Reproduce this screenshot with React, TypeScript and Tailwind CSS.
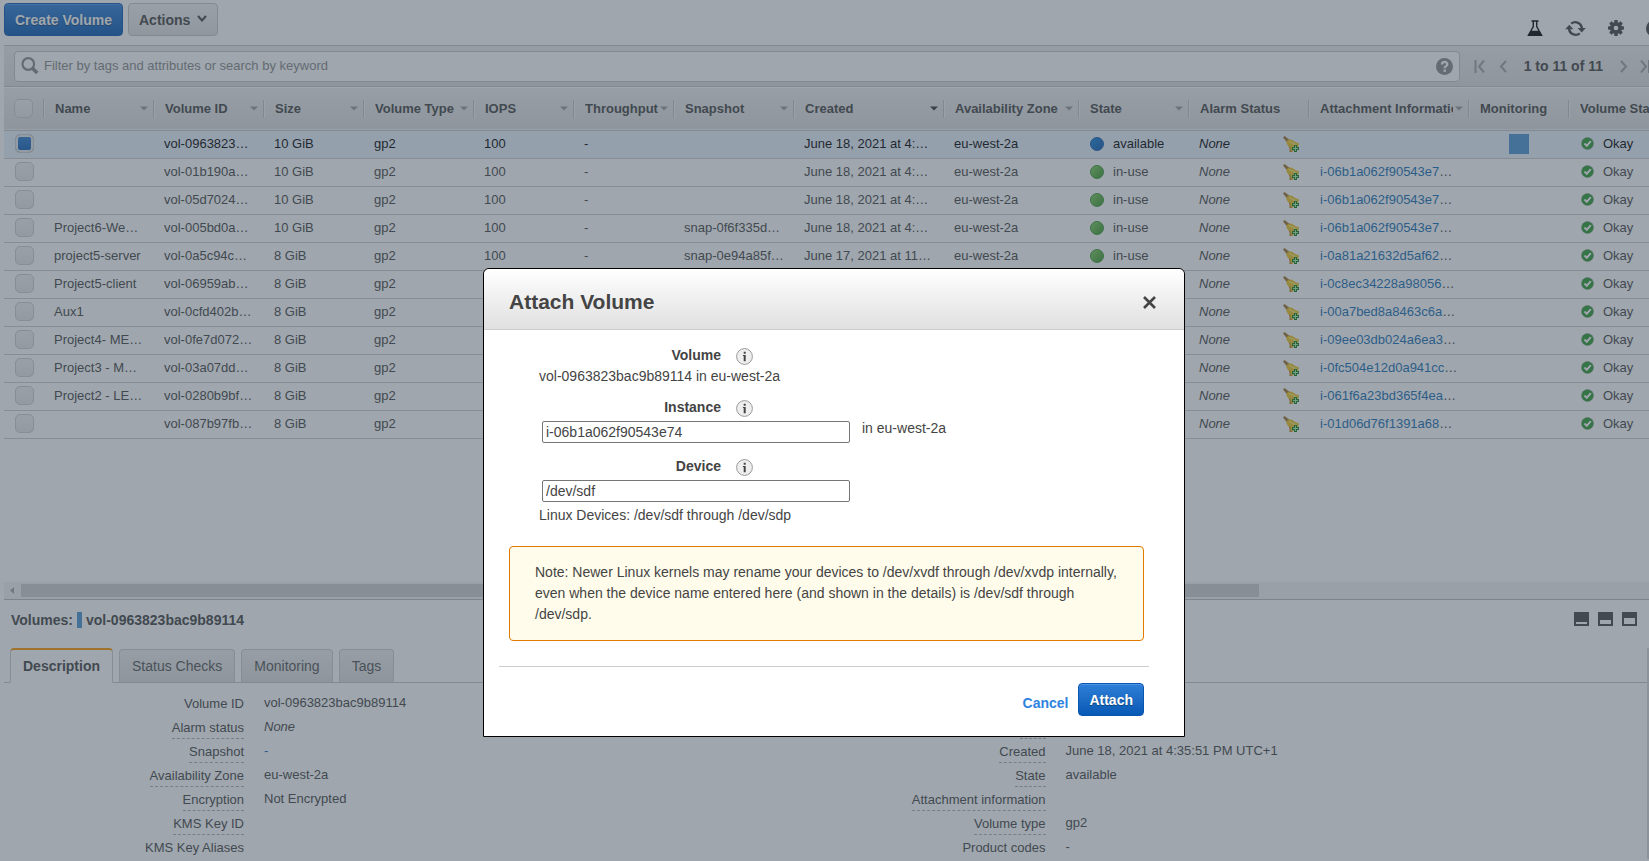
import React from "react";

type Column = { label: string; width: string; menu?: boolean; sorted?: boolean };

const columns: Column[] = [
  { label: "Name", width: "w-[110px]", menu: true },
  { label: "Volume ID", width: "w-[110px]", menu: true },
  { label: "Size", width: "w-[100px]", menu: true },
  { label: "Volume Type", width: "w-[110px]", menu: true },
  { label: "IOPS", width: "w-[100px]", menu: true },
  { label: "Throughput", width: "w-[100px]", menu: true },
  { label: "Snapshot", width: "w-[120px]", menu: true },
  { label: "Created", width: "w-[150px]", menu: true, sorted: true },
  { label: "Availability Zone", width: "w-[135px]", menu: true },
  { label: "State", width: "w-[110px]", menu: true },
  { label: "Alarm Status", width: "w-[120px]" },
  { label: "Attachment Information", width: "w-[160px]", menu: true },
  { label: "Monitoring", width: "w-[100px]" },
  { label: "Volume Status", width: "w-[120px]" },
];

type Volume = {
  name: string;
  id: string;
  size: string;
  snapshot: string;
  created: string;
  state: "available" | "in-use";
  instance: string;
};

const volumes: Volume[] = [
  { name: "", id: "vol-0963823…", size: "10 GiB", snapshot: "", created: "June 18, 2021 at 4:…", state: "available", instance: "" },
  { name: "", id: "vol-01b190a…", size: "10 GiB", snapshot: "", created: "June 18, 2021 at 4:…", state: "in-use", instance: "i-06b1a062f90543e7" },
  { name: "", id: "vol-05d7024…", size: "10 GiB", snapshot: "", created: "June 18, 2021 at 4:…", state: "in-use", instance: "i-06b1a062f90543e7" },
  { name: "Project6-We…", id: "vol-005bd0a…", size: "10 GiB", snapshot: "snap-0f6f335d…", created: "June 18, 2021 at 4:…", state: "in-use", instance: "i-06b1a062f90543e7" },
  { name: "project5-server", id: "vol-0a5c94c…", size: "8 GiB", snapshot: "snap-0e94a85f…", created: "June 17, 2021 at 11…", state: "in-use", instance: "i-0a81a21632d5af62" },
  { name: "Project5-client", id: "vol-06959ab…", size: "8 GiB", snapshot: "", created: "", state: "in-use", instance: "i-0c8ec34228a98056" },
  { name: "Aux1", id: "vol-0cfd402b…", size: "8 GiB", snapshot: "", created: "", state: "in-use", instance: "i-00a7bed8a8463c6a" },
  { name: "Project4- ME…", id: "vol-0fe7d072…", size: "8 GiB", snapshot: "", created: "", state: "in-use", instance: "i-09ee03db024a6ea3" },
  { name: "Project3 - M…", id: "vol-03a07dd…", size: "8 GiB", snapshot: "", created: "", state: "in-use", instance: "i-0fc504e12d0a941cc" },
  { name: "Project2 - LE…", id: "vol-0280b9bf…", size: "8 GiB", snapshot: "", created: "", state: "in-use", instance: "i-061f6a23bd365f4ea" },
  { name: "", id: "vol-087b97fb…", size: "8 GiB", snapshot: "", created: "", state: "in-use", instance: "i-01d06d76f1391a68" },
];

type Detail = { label: string; value?: React.ReactNode; plain?: boolean };

const leftDetails: Detail[] = [
  { label: "Volume ID", value: "vol-0963823bac9b89114", plain: true },
  { label: "Alarm status", value: <em>None</em> },
  { label: "Snapshot", value: <a href="#snapshot" className="text-[#0a6cce]">-</a> },
  { label: "Availability Zone", value: "eu-west-2a" },
  { label: "Encryption", value: "Not Encrypted" },
  { label: "KMS Key ID" },
  { label: "KMS Key Aliases", plain: true },
];

const rightDetails: Detail[] = [
  { label: "Size", value: "10 GiB" },
  { label: "Created", value: "June 18, 2021 at 4:35:51 PM UTC+1" },
  { label: "State", value: "available" },
  { label: "Attachment information" },
  { label: "Volume type", value: "gp2" },
  { label: "Product codes", value: "-", plain: true },
];

function FlaskIcon() {
  return (
    <svg width="16" height="17" viewBox="0 0 16 17" aria-hidden="true">
      <path d="M4.5 1h7M6.3 1.5v5L1.4 15.2h13.2L9.7 6.5v-5" fill="none" stroke="#000" strokeWidth="1.4" />
      <path d="M4 10.8h8l3 5.2H1z" fill="#000" />
    </svg>
  );
}

function RefreshIcon() {
  return (
    <svg width="21" height="17" viewBox="0 0 21 17" aria-hidden="true">
      <g fill="none" stroke="#444" strokeWidth="2.4">
        <path d="M6.2 3.6A6.6 6.6 0 0 1 16.9 8.6" />
        <path d="M14.8 13.4A6.6 6.6 0 0 1 4.1 8.4" />
      </g>
      <path d="M12.6 8h8.2l-4.1 4.4zM.2 9.2h8.2L4.3 4.8z" fill="#444" />
    </svg>
  );
}

function GearIcon() {
  return (
    <svg width="16" height="16" viewBox="0 0 16 16" className="mb-px" aria-hidden="true">
      <g fill="#444">
        <rect x="6.2" y="0" width="3.6" height="16" rx="0.8" />
        <rect x="6.2" y="0" width="3.6" height="16" rx="0.8" transform="rotate(45 8 8)" />
        <rect x="6.2" y="0" width="3.6" height="16" rx="0.8" transform="rotate(90 8 8)" />
        <rect x="6.2" y="0" width="3.6" height="16" rx="0.8" transform="rotate(135 8 8)" />
        <circle cx="8" cy="8" r="6" />
      </g>
      <circle cx="8" cy="8" r="2.3" fill="#fff" />
    </svg>
  );
}

function HelpIcon({ className }: { className: string }) {
  return (
    <svg width="17" height="17" viewBox="0 0 17 17" className={className} aria-hidden="true">
      <circle cx="8.5" cy="8.5" r="8.5" fill="currentColor" />
      <path d="M5.9 6.6c0-3.6 5.5-3.4 5.4-.3 0 1.9-2.6 1.8-2.6 3.9" fill="none" stroke="#fff" strokeWidth="2.3" />
      <rect x="7.5" y="11.5" width="2.4" height="2.3" fill="#fff" />
    </svg>
  );
}

function SearchIcon() {
  return (
    <svg width="18" height="18" viewBox="0 0 18 18" className="shrink-0" aria-hidden="true">
      <circle cx="7.3" cy="7" r="5.8" fill="none" stroke="#888" strokeWidth="2.2" />
      <path d="M11.4 11.2l4.9 4.9" stroke="#888" strokeWidth="3.6" />
    </svg>
  );
}

function BellIcon() {
  return (
    <svg width="16" height="16" viewBox="0 0 16 16" aria-hidden="true">
      <path d="M0 1.5L1.6 0l5 4-2.400 2.400z" fill="#a0722c" />
      <path
        d="M3.600 5.500C5 3.400 8 3 10.200 4.600c1.700 1.300 3.400 2.200 5.600 2.600.4 2.600-1.200 4.800-3.200 6.400-1.800 1.500-3.800 2.400-5.800 2.200.5-2.200-.2-4-1.500-5.500C3.900 8.700 3 7.200 3.600 5.500z"
        fill="#ecc420"
      />
      <path d="M6 5.800c3 .2 4 2.400 7.500 3" stroke="#fbe46a" strokeWidth="1.500" fill="none" />
      <path d="M6.200 10.500c1.200 1.500 1.300 3 .8 5l2.500-.3" stroke="#b98c2c" strokeWidth="1.200" fill="none" />
      <path d="M11 9h3v2h2v3h-2v2h-3v-2H9v-3h2z" fill="#0c7d20" />
      <path d="M12.500 10v5M10 12.500h5" stroke="#a6efa6" strokeWidth="1" />
    </svg>
  );
}

function OkayIcon() {
  return (
    <svg width="13" height="13" viewBox="0 0 13 13" className="mb-[2px]" aria-hidden="true">
      <circle cx="6.5" cy="6.5" r="6" fill="#2a9a30" stroke="#7d9b7e" strokeWidth=".6" />
      <path d="M3.500 6.500l2.300 2.300 4-4.600" fill="none" stroke="#fff" strokeWidth="2" />
    </svg>
  );
}

function InfoIcon() {
  return (
    <svg width="17" height="17" viewBox="0 0 17 17" aria-hidden="true">
      <circle cx="8.5" cy="8.5" r="7.9" fill="#eee" stroke="#999" />
      <path d="M7.700 3.800h2v1.900h-2zM6.900 7h2.800v6.300h-2V7.900h-.8z" fill="#444" />
    </svg>
  );
}

function PageArrow({ label, path, className }: { label: string; path: string; className: string }) {
  return (
    <button type="button" aria-label={label} className={className}>
      <svg width="11" height="13" viewBox="0 0 11 13" aria-hidden="true">
        <path d={path} fill="none" stroke="#a0a0a0" strokeWidth="2" />
      </svg>
    </button>
  );
}

function PaneIcon({ top, label }: { top: number; label: string }) {
  return (
    <button type="button" aria-label={label}>
      <svg width="15" height="14" viewBox="0 0 15 14" className="block" aria-hidden="true">
        <path d="M0 0h15v14H0z" fill="#444" />
        <path d={`M2 ${top}h11v${12 - top}H2z`} fill="#fff" />
      </svg>
    </button>
  );
}

const checkbox =
  "block h-[19px] w-[19px] appearance-none rounded-[5px] border border-[#ccc] bg-linear-to-b from-[#f2f2f2] to-[#e6e6e6] checked:from-[#2e7fd6] checked:to-[#0a5bb5] checked:shadow-[inset_0_0_0_2px_#e8e8e8]";

function VolumeTable() {
  return (
    <table className="w-[1685px] table-fixed border-collapse text-[13px] leading-4">
      <thead>
        <tr className="h-[42px] border-b border-[#c6c6c6] bg-linear-to-b from-[#efefef] to-[#dddddd] text-left">
          <th className="w-10 p-0">
            <div className="flex h-[19px] items-center border-r border-[#c2c2c2] pl-[10px] shadow-[1px_0_0_#f4f4f4]">
              <input type="checkbox" aria-label="Select all volumes" className={checkbox} />
            </div>
          </th>
          {columns.map((column) => (
            <th key={column.label} className={`${column.width} p-0`}>
              <div className="flex h-[18px] items-center gap-[2px] border-r border-[#c2c2c2] pr-[5px] pl-[11px] shadow-[1px_0_0_#f4f4f4]">
                <span className="min-w-0 flex-1 overflow-hidden whitespace-nowrap">{column.label}</span>
                {column.menu && (
                  <svg width="8" height="5" viewBox="0 0 8 5" className={column.sorted ? "shrink-0 text-[#333]" : "shrink-0 text-[#999]"} aria-hidden="true">
                    <path d="M0 .5h8l-4 4z" fill="currentColor" />
                  </svg>
                )}
              </div>
            </th>
          ))}
        </tr>
      </thead>
      <tbody>
        {volumes.map((volume, index) => {
          const selected = index === 0;
          return (
            <tr
              key={volume.id}
              className={
                selected
                  ? "h-7 border-b border-[#ccc] bg-[#ebf3ff] text-black [&>td]:whitespace-nowrap"
                  : "h-7 border-b border-[#ccc] text-[#444] [&>td]:whitespace-nowrap"
              }
            >
              <td className="pt-0 pr-0 pb-[2px] pl-[11px]">
                <input type="checkbox" defaultChecked={selected} aria-label={`Select ${volume.id}`} className={checkbox} />
              </td>
              <td className="py-0 pl-[10px]">{volume.name}</td>
              <td className="py-0 pl-[10px]">{volume.id}</td>
              <td className="py-0 pl-[10px]">{volume.size}</td>
              <td className="py-0 pl-[10px]">gp2</td>
              <td className="py-0 pl-[10px]">100</td>
              <td className="py-0 pl-[10px]">-</td>
              <td className="py-0 pl-[10px]">{volume.snapshot}</td>
              <td className="py-0 pl-[10px]">{volume.created}</td>
              <td className="py-0 pl-[10px]">eu-west-2a</td>
              <td className="py-0 pl-[11px]">
                <div className="flex items-center gap-[9px]">
                  <span
                    className={
                      volume.state === "available"
                        ? "h-[14px] w-[14px] rounded-full border border-[#1a5fb0] bg-linear-to-br from-[#0f86dc] to-[#1257b0]"
                        : "h-[14px] w-[14px] rounded-full border border-[#3f9a35] bg-linear-to-br from-[#80cf5c] to-[#34962c]"
                    }
                  />
                  {volume.state}
                </div>
              </td>
              <td className="py-0 pr-[10px] pl-[10px]">
                <div className="flex items-center justify-between">
                  <em>None</em>
                  <BellIcon />
                </div>
              </td>
              <td className="py-0 pl-[11px]">
                {volume.instance && (
                  <>
                    <a href={`#${volume.instance}`} className="text-[#146eb4]">{volume.instance}</a>…
                  </>
                )}
              </td>
              <td className="p-0">{selected && <div className="mx-auto h-5 w-5 bg-[#4b95d7]" />}</td>
              <td className="py-0 pl-[12px]">
                <div className="flex items-center gap-[9px]">
                  <OkayIcon />
                  Okay
                </div>
              </td>
            </tr>
          );
        })}
      </tbody>
    </table>
  );
}

function DetailList({ items, className }: { items: Detail[]; className: string }) {
  return (
    <dl className={className}>
      {items.map((item) => (
        <div key={item.label} className="flex h-6 gap-5">
          <dt className="flex w-60 justify-end">
            <span className={item.plain ? "border-b border-transparent pt-[5px] leading-4" : "border-b border-dashed border-[#b0b0b0] pt-[5px] leading-4"}>
              {item.label}
            </span>
          </dt>
          <dd className="pt-1 leading-4">{item.value}</dd>
        </div>
      ))}
    </dl>
  );
}

const blueButton =
  "h-[33px] rounded border border-[#0a55b0] bg-linear-to-b from-[#2e7fd8] to-[#0659b4] text-sm font-bold text-white shadow-[inset_0_1px_0_#4c95e4] [text-shadow:0_1px_1px_#00000060]";
const idleTab =
  "h-[33px] rounded-t border border-b-0 border-[#ccc] bg-linear-to-b from-[#eee] to-[#dcdcdc] px-3 text-[#555]";

function FieldLabel({ htmlFor, children }: { htmlFor?: string; children: string }) {
  return (
    <div className="flex h-5 items-center">
      <label htmlFor={htmlFor} className="w-[182px] text-right font-bold">
        {children}
      </label>
      <button type="button" aria-label={`About ${children}`} className="mt-[3px] ml-[15px]">
        <InfoIcon />
      </button>
    </div>
  );
}

function AttachDialog() {
  const field = "ml-[3px] block h-[22px] w-[308px] rounded-xs border border-[#767676] bg-white px-[3px]";
  return (
    <div role="dialog" aria-labelledby="attach-title" className="w-[702px] rounded-t-md border border-black bg-white text-sm leading-[21px] text-[#444]">
      <header className="flex h-[61px] items-center justify-between rounded-t-md border-b border-[#ccc] bg-linear-to-b from-white to-[#e0e0e0] pt-[6px] pr-7 pl-[25px]">
        <h1 id="attach-title" className="text-[21px] leading-6 font-bold">Attach Volume</h1>
        <button type="button" aria-label="Close">
          <svg width="13" height="13" viewBox="0 0 13 13" aria-hidden="true">
            <path d="M1 1l11 11M12 1L1 12" stroke="#444" strokeWidth="2.6" />
          </svg>
        </button>
      </header>
      <form className="pt-[15px] pb-5" onSubmit={(event) => event.preventDefault()}>
        <div className="pl-[55px]">
          <FieldLabel>Volume</FieldLabel>
          <p className="pt-px">vol-0963823bac9b89114 in eu-west-2a</p>
          <div className="pt-[10px]">
            <FieldLabel htmlFor="instance">Instance</FieldLabel>
            <div className="flex h-[26px] items-end gap-3">
              <input id="instance" defaultValue="i-06b1a062f90543e74" className={field} />
              <span className="self-start pt-px">in eu-west-2a</span>
            </div>
          </div>
          <div className="pt-[13px]">
            <FieldLabel htmlFor="device">Device</FieldLabel>
            <div className="flex h-[26px] items-end">
              <input id="device" defaultValue="/dev/sdf" className={field} />
            </div>
          </div>
          <p className="pt-[3px]">Linux Devices: /dev/sdf through /dev/sdp</p>
        </div>
        <p className="mt-5 mr-10 ml-[25px] rounded border border-[#e07b00] bg-[#fffceb] py-[15px] pr-5 pl-[25px]">
          Note: Newer Linux kernels may rename your devices to /dev/xvdf through /dev/xvdp internally, even when the device name entered here (and shown in the details) is /dev/sdf through /dev/sdp.
        </p>
        <div className="mt-[25px] mr-[35px] ml-[15px] flex items-center justify-end gap-[10px] border-t border-[#ccc] pt-4 pr-[5px]">
          <button type="button" className="pt-2 font-bold text-[#2e84e0]">Cancel</button>
          <button type="submit" className={`${blueButton} px-[10px]`}>Attach</button>
        </div>
      </form>
    </div>
  );
}

export default function App() {
  return (
    <div className="relative h-screen overflow-hidden bg-white font-['Liberation_Sans',Arial,sans-serif] text-[13px] text-[#444]">
      <div className="flex h-full flex-col pl-1">
        <div className="flex h-[45px] shrink-0 items-start gap-[5px] pt-[3px]">
          <button type="button" className={`${blueButton} px-[10px]`}>Create Volume</button>
          <button type="button" className="flex h-[33px] items-center gap-[7px] rounded border border-[#c4c4c4] bg-linear-to-b from-[#f2f2f2] to-[#e0e0e0] px-[10px] text-sm font-bold">
            Actions
            <svg width="10" height="8" viewBox="0 0 10 8" className="mb-px" aria-hidden="true">
              <path d="M1 1l4 4.500L9 1" fill="none" stroke="#444" strokeWidth="2" />
            </svg>
          </button>
          <div className="-mr-[14px] ml-auto flex h-[34px] items-end gap-[22px] pt-[6px]">
            <button type="button" aria-label="Experiments"><FlaskIcon /></button>
            <button type="button" aria-label="Refresh"><RefreshIcon /></button>
            <button type="button" aria-label="Settings"><GearIcon /></button>
            <button type="button" aria-label="Help"><HelpIcon className="text-[#444]" /></button>
          </div>
        </div>

        <div className="flex h-[42px] shrink-0 items-center border-t border-b border-[#c4c4c4] bg-linear-to-b from-[#ececec] to-[#dedede] pl-[10px]">
          <div className="flex h-[31px] flex-1 items-center gap-[5px] rounded border border-[#c4c4c4] bg-white px-[6px]">
            <SearchIcon />
            <input
              type="search"
              aria-label="Filter volumes"
              placeholder="Filter by tags and attributes or search by keyword"
              className="min-w-0 flex-1 bg-transparent outline-none placeholder:text-[#888]"
            />
            <button type="button" aria-label="Search help"><HelpIcon className="text-[#888]" /></button>
          </div>
          <nav className="-mr-[2px] flex shrink-0 items-center pl-[14px] text-sm font-bold" aria-label="Pages">
            <PageArrow label="First page" path="M1.500 0v13M10 0.500l-5 6 5 6" className="" />
            <PageArrow label="Previous page" path="M9 1l-5 5.500 5 5.500" className="ml-3" />
            <span className="mr-[14px] ml-4 whitespace-nowrap">1 to 11 of 11</span>
            <PageArrow label="Next page" path="M4 1l5 5.500-5 5.500" className="" />
            <PageArrow label="Last page" path="M1 .500l5 6-5 6M9 0v13" className="ml-3" />
          </nav>
        </div>

        <main className="flex min-h-0 flex-1 flex-col overflow-hidden">
          <div className="min-h-0 flex-1 overflow-hidden border-t border-white">
            <VolumeTable />
          </div>
          <div className="flex h-[17px] items-center bg-[#f3f3f3] pr-[390px]">
            <svg width="17" height="9" viewBox="0 0 17 9" aria-hidden="true">
              <path d="M10 1v7L6 4.500z" fill="#a3a3a3" />
            </svg>
            <div className="h-[13px] flex-1 bg-[#cecece]" />
          </div>
        </main>

        <section className="h-[262px] shrink-0 border-t border-[#bbb]">
          <div className="flex h-12 items-start justify-between pt-3 pr-3 pl-[7px]">
            <h2 className="flex items-center gap-1 text-sm leading-4 font-bold">
              Volumes: <span className="h-4 w-[5px] bg-[#4b95d7]" /> vol-0963823bac9b89114
            </h2>
            <div className="flex gap-[9px]">
              <PaneIcon top={10} label="Minimise details" />
              <PaneIcon top={8} label="Split details" />
              <PaneIcon top={6} label="Maximise details" />
            </div>
          </div>
          <div className="mr-0 border-r-2 border-[#d8d8d8]">
            <div role="tablist" className="flex items-end gap-[6px] border-b border-[#c4c4c4] pl-[6px] text-sm">
              <button type="button" role="tab" aria-selected="true" className="-mb-px h-[35px] rounded-t border border-t-2 border-[#ccc] border-t-[#f90] border-b-white bg-white px-3 font-bold">
                Description
              </button>
              <button type="button" role="tab" className={idleTab}>Status Checks</button>
              <button type="button" role="tab" className={idleTab}>Monitoring</button>
              <button type="button" role="tab" className={idleTab}>Tags</button>
            </div>
            <div className="grid grid-cols-2 pt-2 pr-10">
              <DetailList items={leftDetails} className="" />
              <DetailList items={rightDetails} className="pt-6" />
            </div>
          </div>
        </section>
      </div>

      <div className="absolute inset-0 flex items-start justify-center bg-[#3f4d5b]/50 pt-[268px] pl-[19px]">
        <AttachDialog />
      </div>
    </div>
  );
}
